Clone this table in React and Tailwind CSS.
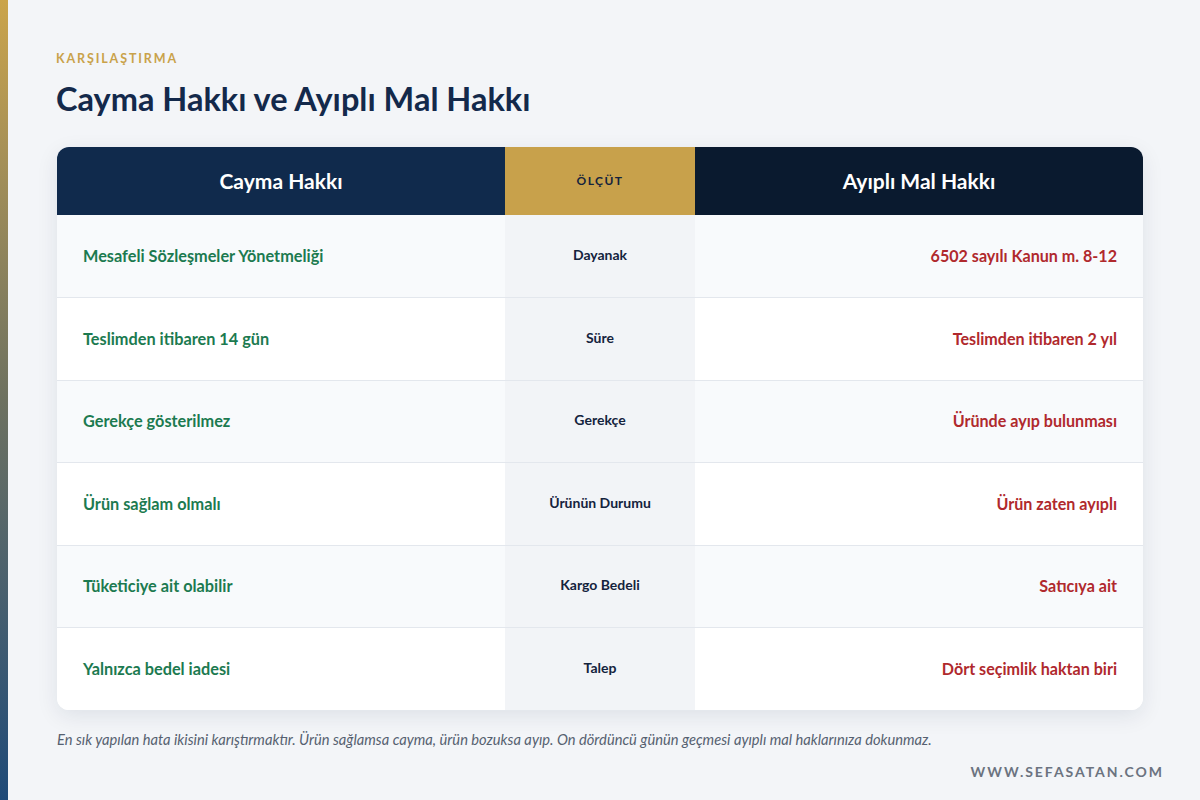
import React from "react";

const rows = [
  { left: "Mesafeli Sözleşmeler Yönetmeliği", mid: "Dayanak", right: "6502 sayılı Kanun m. 8-12" },
  { left: "Teslimden itibaren 14 gün", mid: "Süre", right: "Teslimden itibaren 2 yıl" },
  { left: "Gerekçe gösterilmez", mid: "Gerekçe", right: "Üründe ayıp bulunması" },
  { left: "Ürün sağlam olmalı", mid: "Ürünün Durumu", right: "Ürün zaten ayıplı" },
  { left: "Tüketiciye ait olabilir", mid: "Kargo Bedeli", right: "Satıcıya ait" },
  { left: "Yalnızca bedel iadesi", mid: "Talep", right: "Dört seçimlik haktan biri" },
];

function Row(props) {
  const { row, index } = props;
  const bg = index % 2 === 0 ? "bg-[#f8fafc]" : "bg-white";
  const border = index > 0 ? "border-t border-[#e3e7ed]" : "";
  return (
    <div className={`flex h-[82.5px] ${border}`}>
      <div className={`w-[448px] ${bg} flex items-center px-[26px]`}>
        <span className="text-[16.3px] font-bold text-[#1c7a50]">{row.left}</span>
      </div>
      <div className="w-[190px] bg-[#f2f4f7] flex items-center justify-center">
        <span className="text-[14px] leading-[18px] mb-[3px] font-bold text-[#14233d]">{row.mid}</span>
      </div>
      <div className={`w-[448px] ${bg} flex items-center justify-end px-[26px]`}>
        <span className="text-[16.1px] font-bold text-[#b0292d]">{row.right}</span>
      </div>
    </div>
  );
}

export default function App() {
  return (
    <div
      className="w-[1200px] h-[800px] flex bg-[#f3f5f8] overflow-hidden"
      style={{ fontFamily: "Lato, 'Noto Sans', sans-serif" }}
    >
      <div className="w-2 h-full bg-gradient-to-b from-[#cba449] via-[#6d7160] to-[#1e4a78]" />
      <main className="flex-1 flex flex-col pl-[48px] pr-[36px]">
        <div className="pt-[50px] text-[12.5px] font-bold tracking-[0.15em] text-[#c9a24a]">
          KARŞILAŞTIRMA
        </div>
        <h1 className="mt-[10px] text-[32.5px] leading-[40px] font-bold text-[#13294b]">
          Cayma Hakkı ve Ayıplı Mal Hakkı
        </h1>

        <div className="mt-[28px] ml-px w-[1086px] rounded-[12px] overflow-hidden bg-white shadow-[0_6px_22px_rgba(15,35,70,0.09)]">
          <div className="flex h-[68px]">
            <div className="w-[448px] bg-[#102a4c] flex items-center justify-center">
              <span className="text-[21px] font-bold text-white">Cayma Hakkı</span>
            </div>
            <div className="w-[190px] bg-[#c8a14b] flex items-center justify-center">
              <span className="text-[12px] font-bold tracking-[0.12em] text-[#14233d]">ÖLÇÜT</span>
            </div>
            <div className="w-[448px] bg-[#0a1a2f] flex items-center justify-center">
              <span className="text-[21px] font-bold text-white">Ayıplı Mal Hakkı</span>
            </div>
          </div>
          {rows.map((row, i) => (
            <Row key={i} row={row} index={i} />
          ))}
        </div>

        <p className="mt-[18px] ml-px text-[14.7px] italic text-[#566170]">
          En sık yapılan hata ikisini karıştırmaktır. Ürün sağlamsa cayma, ürün bozuksa ayıp. On dördüncü günün geçmesi ayıplı mal haklarınıza dokunmaz.
        </p>
        <div className="mt-[11px] text-right text-[14px] font-bold tracking-[0.14em] text-[#6b7380]">
          WWW.SEFASATAN.COM
        </div>
      </main>
    </div>
  );
}
